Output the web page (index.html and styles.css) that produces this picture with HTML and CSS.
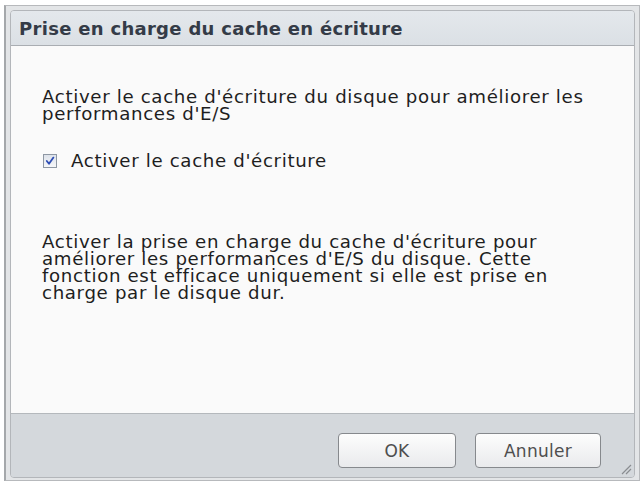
FILE: index.html
```html
<!DOCTYPE html>
<html>
<head>
<meta charset="utf-8">
<link rel="stylesheet" href="styles.css">
</head>
<body>
<div class="frame">
  <div class="dialog">
    <div class="titlebar">Prise en charge du cache en écriture</div>
    <div class="content">
      <p class="para first">Activer le cache d'écriture du disque pour améliorer les performances d'E/S</p>
      <label class="check-row">
        <span class="checkbox">
          <svg width="10" height="10" viewBox="0 0 10 10"><path d="M1.8 5 L4 7.8 L8.4 1.6" fill="none" stroke="#2d4db5" stroke-width="1.8" stroke-linecap="round" stroke-linejoin="round"/></svg>
        </span>
        <span class="check-label">Activer le cache d'écriture</span>
      </label>
      <p class="para second">Activer la prise en charge du cache d'écriture pour améliorer les performances d'E/S du disque. Cette fonction est efficace uniquement si elle est prise en charge par le disque dur.</p>
    </div>
    <div class="footer">
      <button class="btn btn-ok">OK</button>
      <button class="btn btn-cancel">Annuler</button>
      <svg class="grip" width="12" height="12" viewBox="0 0 12 12"><path d="M2 11 L11 2 M6 11 L11 6" stroke="#8a8d91" stroke-width="1.2" fill="none"/></svg>
    </div>
  </div>
</div>
</body>
</html>
```

FILE: styles.css
```css
html, body {
  margin: 0;
  padding: 0;
  background: #ffffff;
}
body {
  font-family: "DejaVu Sans", Verdana, sans-serif;
  color: #222;
}
.frame {
  margin: 5px 3px 0 4px;
  height: 476px;
  box-sizing: border-box;
  border: 1px solid #b7b9bc;
  border-left: 2px solid #a5a8ab;
  background: #e3e5e7;
  padding: 4px 4px 2px 4px;
  display: flex;
}
.dialog {
  flex: 1;
  display: flex;
  flex-direction: column;
  border: 1px solid #b3b6ba;
  border-radius: 4px;
  overflow: hidden;
}
.titlebar {
  height: 34px;
  line-height: 36px;
  padding-left: 8px;
  background: linear-gradient(#e4e8ec, #dbe0e5);
  border-bottom: 1px solid #a9adb2;
  font-weight: bold;
  font-size: 18px;
  letter-spacing: 0.3px;
  color: #343b47;
  white-space: nowrap;
}
.content {
  height: 368px;
  background: #fafafa;
  border-bottom: 1px solid #b4b8bc;
  padding: 42px 0 0 31px;
  box-sizing: border-box;
  font-size: 18.2px;
  letter-spacing: 0.65px;
  line-height: 17px;
  color: #1e1e1e;
}
.para {
  margin: 0;
  width: 570px;
}
.check-row {
  display: flex;
  align-items: center;
  margin-top: 30px;
}
.checkbox {
  width: 12px;
  height: 12px;
  flex: none;
  border: 1px solid #8e97a3;
  background: linear-gradient(#dde2ea, #f6f7f9);
  display: flex;
  align-items: center;
  justify-content: center;
  margin-left: 1px;
  margin-right: 14px;
}
.check-label {
  line-height: 17px;
}
.second {
  margin-top: 64px;
}
.footer {
  flex: 1;
  background: #d4d8dc;
  display: flex;
  align-items: flex-start;
  justify-content: flex-end;
  padding: 19px 33px 0 0;
  gap: 19px;
  position: relative;
}
.btn {
  height: 35px;
  border: 1px solid #86898d;
  border-radius: 4px;
  background: linear-gradient(#fdfdfd, #e9eaec);
  font-family: "DejaVu Sans", Verdana, sans-serif;
  font-size: 17px;
  letter-spacing: 0.3px;
  color: #4e4e4e;
  padding: 0;
}
.btn-ok { width: 118px; }
.btn-cancel { width: 126px; }
.grip {
  position: absolute;
  right: 2px;
  bottom: 2px;
}
```
